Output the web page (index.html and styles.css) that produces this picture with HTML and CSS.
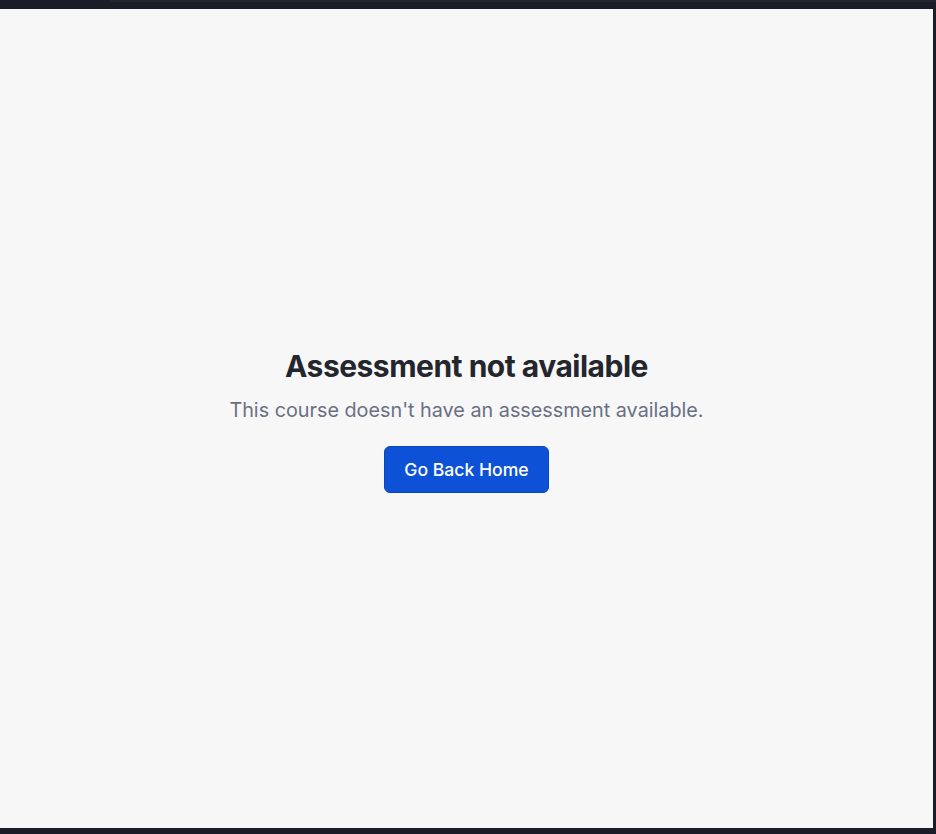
FILE: index.html
```html
<!DOCTYPE html>
<html lang="en">
<head>
<meta charset="utf-8">
<title>Assessment not available</title>
<link rel="stylesheet" href="styles.css">
</head>
<body>
<div class="frame">
  <div class="topbar"><div class="topbar-tab"></div></div>
  <div class="row">
    <main class="panel">
      <div class="empty">
        <h1 class="title">Assessment not available</h1>
        <p class="subtitle">This course doesn't have an assessment available.</p>
        <button class="btn" type="button">Go Back Home</button>
      </div>
    </main>
    <div class="rightbar"></div>
  </div>
  <div class="bottombar"></div>
</div>
</body>
</html>
```

FILE: styles.css
```css
* { box-sizing: border-box; }
html, body { margin: 0; height: 100%; }
body {
  background: #1a1d27;
  font-family: Inter, "Noto Sans", sans-serif;
}
.frame {
  height: 834px;
  display: flex;
  flex-direction: column;
}
.topbar {
  height: 9px;
  background: #1a1d27;
  display: flex;
  justify-content: flex-end;
}
.topbar-tab {
  width: 826px;
  height: 2px;
  background: #23262f;
}
.row {
  flex: 1;
  display: flex;
}
.panel {
  flex: 1;
  background: #f7f7f7;
  display: flex;
  align-items: center;
  justify-content: center;
  padding-top: 4px;
}
.rightbar {
  width: 3px;
  background: #1a1d27;
}
.bottombar {
  height: 6px;
  background: #1a1d27;
}
.empty {
  display: flex;
  flex-direction: column;
  align-items: center;
  text-align: center;
}
.title {
  margin: 0;
  font-size: 30px;
  line-height: 36px;
  font-weight: 700;
  color: #24262d;
  letter-spacing: -0.5px;
}
.subtitle {
  margin: 11px 0 0;
  font-size: 19.8px;
  line-height: 31px;
  color: #687083;
}
.btn {
  margin-top: 20px;
  font-family: inherit;
  font-size: 17.6px;
  font-weight: 500;
  line-height: 25px;
  color: #ffffff;
  background: #0d52d6;
  border: 1px solid #0b46b8;
  border-radius: 6px;
  padding: 10px 19.5px;
  cursor: pointer;
}
```
